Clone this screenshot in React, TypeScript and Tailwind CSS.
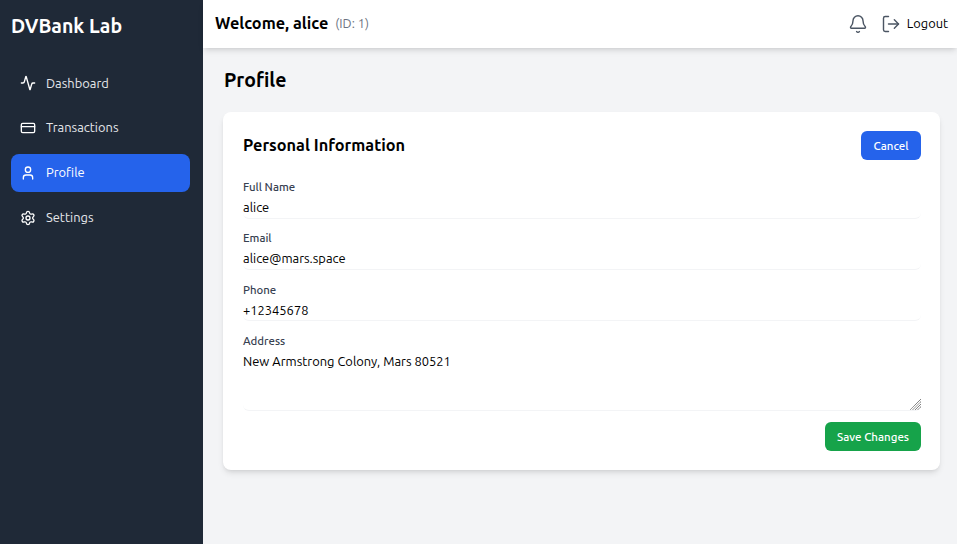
import { Activity, Bell, CreditCard, LogOut, Settings, User } from "lucide-react";

const font = "font-['Ubuntu','Noto_Sans',sans-serif]";

const navItems = [
  { label: "Dashboard", icon: Activity, active: false },
  { label: "Transactions", icon: CreditCard, active: false },
  { label: "Profile", icon: User, active: true },
  { label: "Settings", icon: Settings, active: false },
];

function Sidebar() {
  return (
    <aside className="w-[203px] shrink-0 bg-[#1f2937] text-white">
      <div className="pl-[11px] pt-[12px] h-[61px] text-[19.5px] leading-[28px] font-bold">DVBank Lab</div>
      <nav className="flex flex-col gap-[6.4px] pl-[11px] pr-[13px] pt-[3px]">
        {navItems.map((item) => {
          const Icon = item.icon;
          return (
            <a
              key={item.label}
              className={`flex items-center gap-[10px] h-[38.4px] pl-[9px] rounded-lg text-[12.9px] ${
                item.active ? "bg-[#2563eb] text-white" : "text-[#e5e7eb]"
              }`}
            >
              <Icon size={16} strokeWidth={2} className="shrink-0 text-white" />
              <span>{item.label}</span>
            </a>
          );
        })}
      </nav>
    </aside>
  );
}

function Header() {
  return (
    <header className="h-[48px] shrink-0 bg-white shadow-md flex items-center justify-between pl-[12px] pr-[9px]">
      <div className="flex items-center gap-[7px] -mt-[1px]">
        <span className="text-[16.3px] font-bold text-black">Welcome, alice</span>
        <span className="text-[12.8px] text-[#6b7280]">(ID: 1)</span>
      </div>
      <div className="flex items-center gap-[13px]">
        <Bell size={20} strokeWidth={1.7} className="text-[#4b5563]" />
        <div className="flex items-center gap-[6px]">
          <LogOut size={20} strokeWidth={1.7} className="text-[#4b5563]" />
          <span className="text-[12.8px] text-black">Logout</span>
        </div>
      </div>
    </header>
  );
}

function Field({ label, value }: { label: string; value: string }) {
  return (
    <div className="flex flex-col">
      <label className="text-[11.4px] leading-[16px] font-medium text-[#374151]">{label}</label>
      <input
        readOnly
        value={value}
        className="h-[23.8px] w-full pt-[1.6px] text-[12.9px] text-black border-b border-[#f3f4f6] rounded-md outline-none"
      />
    </div>
  );
}

export default function App() {
  return (
    <div className={`flex h-[544px] w-[957px] overflow-hidden bg-[#f3f4f6] ${font}`}>
      <Sidebar />
      <div className="flex-1 flex flex-col min-w-0">
        <Header />
        <main className="pl-[20px] pt-[18px] pr-[17px]">
          <h1 className="pl-[1px] text-[19.5px] leading-[28px] font-bold text-black">Profile</h1>
          <section className="mt-[18px] bg-white rounded-lg shadow-md pl-[20px] pr-[19px] pt-[19px] pb-[19px]">
            <div className="flex items-center justify-between h-[29px]">
              <h2 className="-mt-[1px] text-[16.3px] font-bold text-black">Personal Information</h2>
              <button className="h-[29px] w-[60px] pt-[1px] rounded-md bg-[#2563eb] text-white text-[11.5px] font-medium">Cancel</button>
            </div>
            <div className="mt-[19px] flex flex-col gap-[11.5px]">
              <Field label="Full Name" value="alice" />
              <Field label="Email" value="alice@mars.space" />
              <Field label="Phone" value="+12345678" />
              <div className="flex flex-col">
                <label className="text-[11.4px] leading-[16px] font-medium text-[#374151]">Address</label>
                <div className="relative">
                  <textarea
                    readOnly
                    value="New Armstrong Colony, Mars 80521"
                    className="block h-[62.1px] w-full resize-none text-[12.9px] text-black border-b border-[#f3f4f6] rounded-md outline-none pt-[3px]"
                  />
                  <svg className="absolute right-0 bottom-[1px]" width="11" height="11" viewBox="0 0 11 11" fill="none" stroke="#525252" strokeWidth="1" strokeDasharray="1 0.5">
                    <path d="M11 0 L0 11" />
                    <path d="M11 2.5 L2.5 11" />
                    <path d="M11 5 L5 11" />
                    <path d="M11 7.5 L7.5 11" />
                  </svg>
                </div>
              </div>
            </div>
            <div className="mt-[11px] flex justify-end">
              <button className="h-[29px] w-[96px] pt-[1px] rounded-md bg-[#16a34a] text-white text-[11.5px] font-medium">Save Changes</button>
            </div>
          </section>
        </main>
      </div>
    </div>
  );
}
